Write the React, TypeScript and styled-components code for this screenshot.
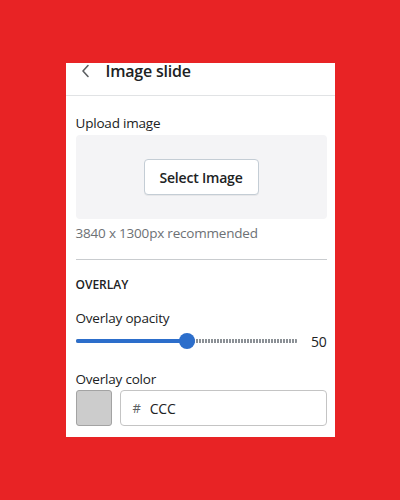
import styled, { createGlobalStyle } from "styled-components";

const GlobalStyle = createGlobalStyle`
  html, body {
    margin: 0;
    padding: 0;
    background: #e82325;
  }
  body {
    font-family: "Open Sans", "Noto Sans", sans-serif;
  }
`;

const Page = styled.div`
  width: 400px;
  height: 500px;
  display: flex;
  align-items: center;
  justify-content: center;
`;

const Panel = styled.div`
  width: 269px;
  height: 374px;
  background: #fff;
  display: flex;
  flex-direction: column;
  overflow: hidden;
`;

const Header = styled.div`
  height: 33px;
  flex-shrink: 0;
  box-sizing: border-box;
  display: flex;
  align-items: flex-start;
  gap: 14px;
  padding: 0 0 0 14px;
  border-bottom: 1px solid #e1e3e5;
`;

const Back = styled.button`
  border: 0;
  background: none;
  padding: 0;
  margin-top: 1px;
  display: flex;
  color: #5c5f62;
`;

const Title = styled.h2`
  margin: 0;
  font-size: 16px;
  font-weight: 600;
  color: #202223;
  line-height: 16px;
  letter-spacing: -0.2px;
`;

const Body = styled.div`
  padding: 17px 8px 0 10px;
  display: flex;
  flex-direction: column;
  font-size: 13.5px;
  letter-spacing: -0.2px;
`;

const Label = styled.div<{ $gap?: number }>`
  line-height: 20px;
  color: #202223;
  margin-bottom: ${(p) => p.$gap ?? 2}px;
`;

const UploadBox = styled.div`
  height: 84px;
  background: #f4f4f6;
  border-radius: 4px;
  display: flex;
  align-items: center;
  justify-content: center;
`;

const SelectButton = styled.button`
  height: 36px;
  width: 115px;
  box-sizing: border-box;
  background: #fff;
  border: 1px solid #c4cdd5;
  border-radius: 4px;
  box-shadow: 0 1px 0 rgba(0, 0, 0, 0.05);
  font-family: inherit;
  font-size: 14px;
  font-weight: 600;
  letter-spacing: -0.2px;
  color: #202223;
`;

const Help = styled.div`
  margin-top: 4px;
  line-height: 20px;
  color: #6d7175;
`;

const Divider = styled.hr`
  margin: 16px 0 17px;
  border: 0;
  border-top: 1px solid #c9cccf;
`;

const Section = styled.div`
  font-size: 12px;
  line-height: 16px;
  font-weight: 600;
  letter-spacing: 0;
  color: #202223;
  text-transform: uppercase;
  margin-bottom: 15px;
`;

const SliderRow = styled.div`
  height: 26px;
  display: flex;
  align-items: center;
  gap: 10px;
  margin-bottom: 15px;
`;

const Track = styled.div`
  position: relative;
  flex: 1;
  height: 4px;
  margin-right: 3px;
  background: repeating-linear-gradient(
    to right,
    #8c9196 0 2px,
    transparent 2px 3px
  );
  border-radius: 2px;
`;

const Fill = styled.div`
  height: 4px;
  background: #2c6ecb;
  border-radius: 2px;
  position: relative;
`;

const Thumb = styled.div`
  position: absolute;
  right: -8px;
  top: -6px;
  width: 16px;
  height: 16px;
  border-radius: 50%;
  background: #2c6ecb;
`;

const Value = styled.div`
  width: 16px;
  font-size: 14px;
  color: #202223;
  text-align: right;
`;

const ColorRow = styled.div`
  display: flex;
  gap: 8px;
`;

const Swatch = styled.div<{ $color: string }>`
  width: 36px;
  height: 36px;
  box-sizing: border-box;
  border: 1px solid #a3a3a3;
  border-radius: 3px;
  background: ${(p) => p.$color};
`;

const HexField = styled.div`
  flex: 1;
  height: 36px;
  box-sizing: border-box;
  border: 1px solid #c4c4c4;
  border-radius: 4px;
  display: flex;
  align-items: center;
  padding-left: 12px;
  gap: 9px;
  font-size: 14px;
  color: #202223;
`;

const Hash = styled.span`
  color: #5c5f62;
  font-size: 13px;
`;

export default function App() {
  const opacity = 50;
  return (
    <>
      <GlobalStyle />
      <Page>
        <Panel>
          <Header>
            <Back aria-label="Back">
              <svg width="12" height="14" viewBox="0 0 12 14" fill="none">
                <path d="M8 1.5 3 7l5 5.5" stroke="currentColor" strokeWidth="1.6" strokeLinecap="round" strokeLinejoin="round" />
              </svg>
            </Back>
            <Title>Image slide</Title>
          </Header>
          <Body>
            <Label>Upload image</Label>
            <UploadBox>
              <SelectButton>Select Image</SelectButton>
            </UploadBox>
            <Help>3840 x 1300px recommended</Help>
            <Divider />
            <Section>Overlay</Section>
            <Label $gap={0}>Overlay opacity</Label>
            <SliderRow>
              <Track>
                <Fill style={{ width: `${opacity}%` }}>
                  <Thumb />
                </Fill>
              </Track>
              <Value>{opacity}</Value>
            </SliderRow>
            <Label $gap={1}>Overlay color</Label>
            <ColorRow>
              <Swatch $color="#cccccc" />
              <HexField>
                <Hash>#</Hash>
                <span>CCC</span>
              </HexField>
            </ColorRow>
          </Body>
        </Panel>
      </Page>
    </>
  );
}
